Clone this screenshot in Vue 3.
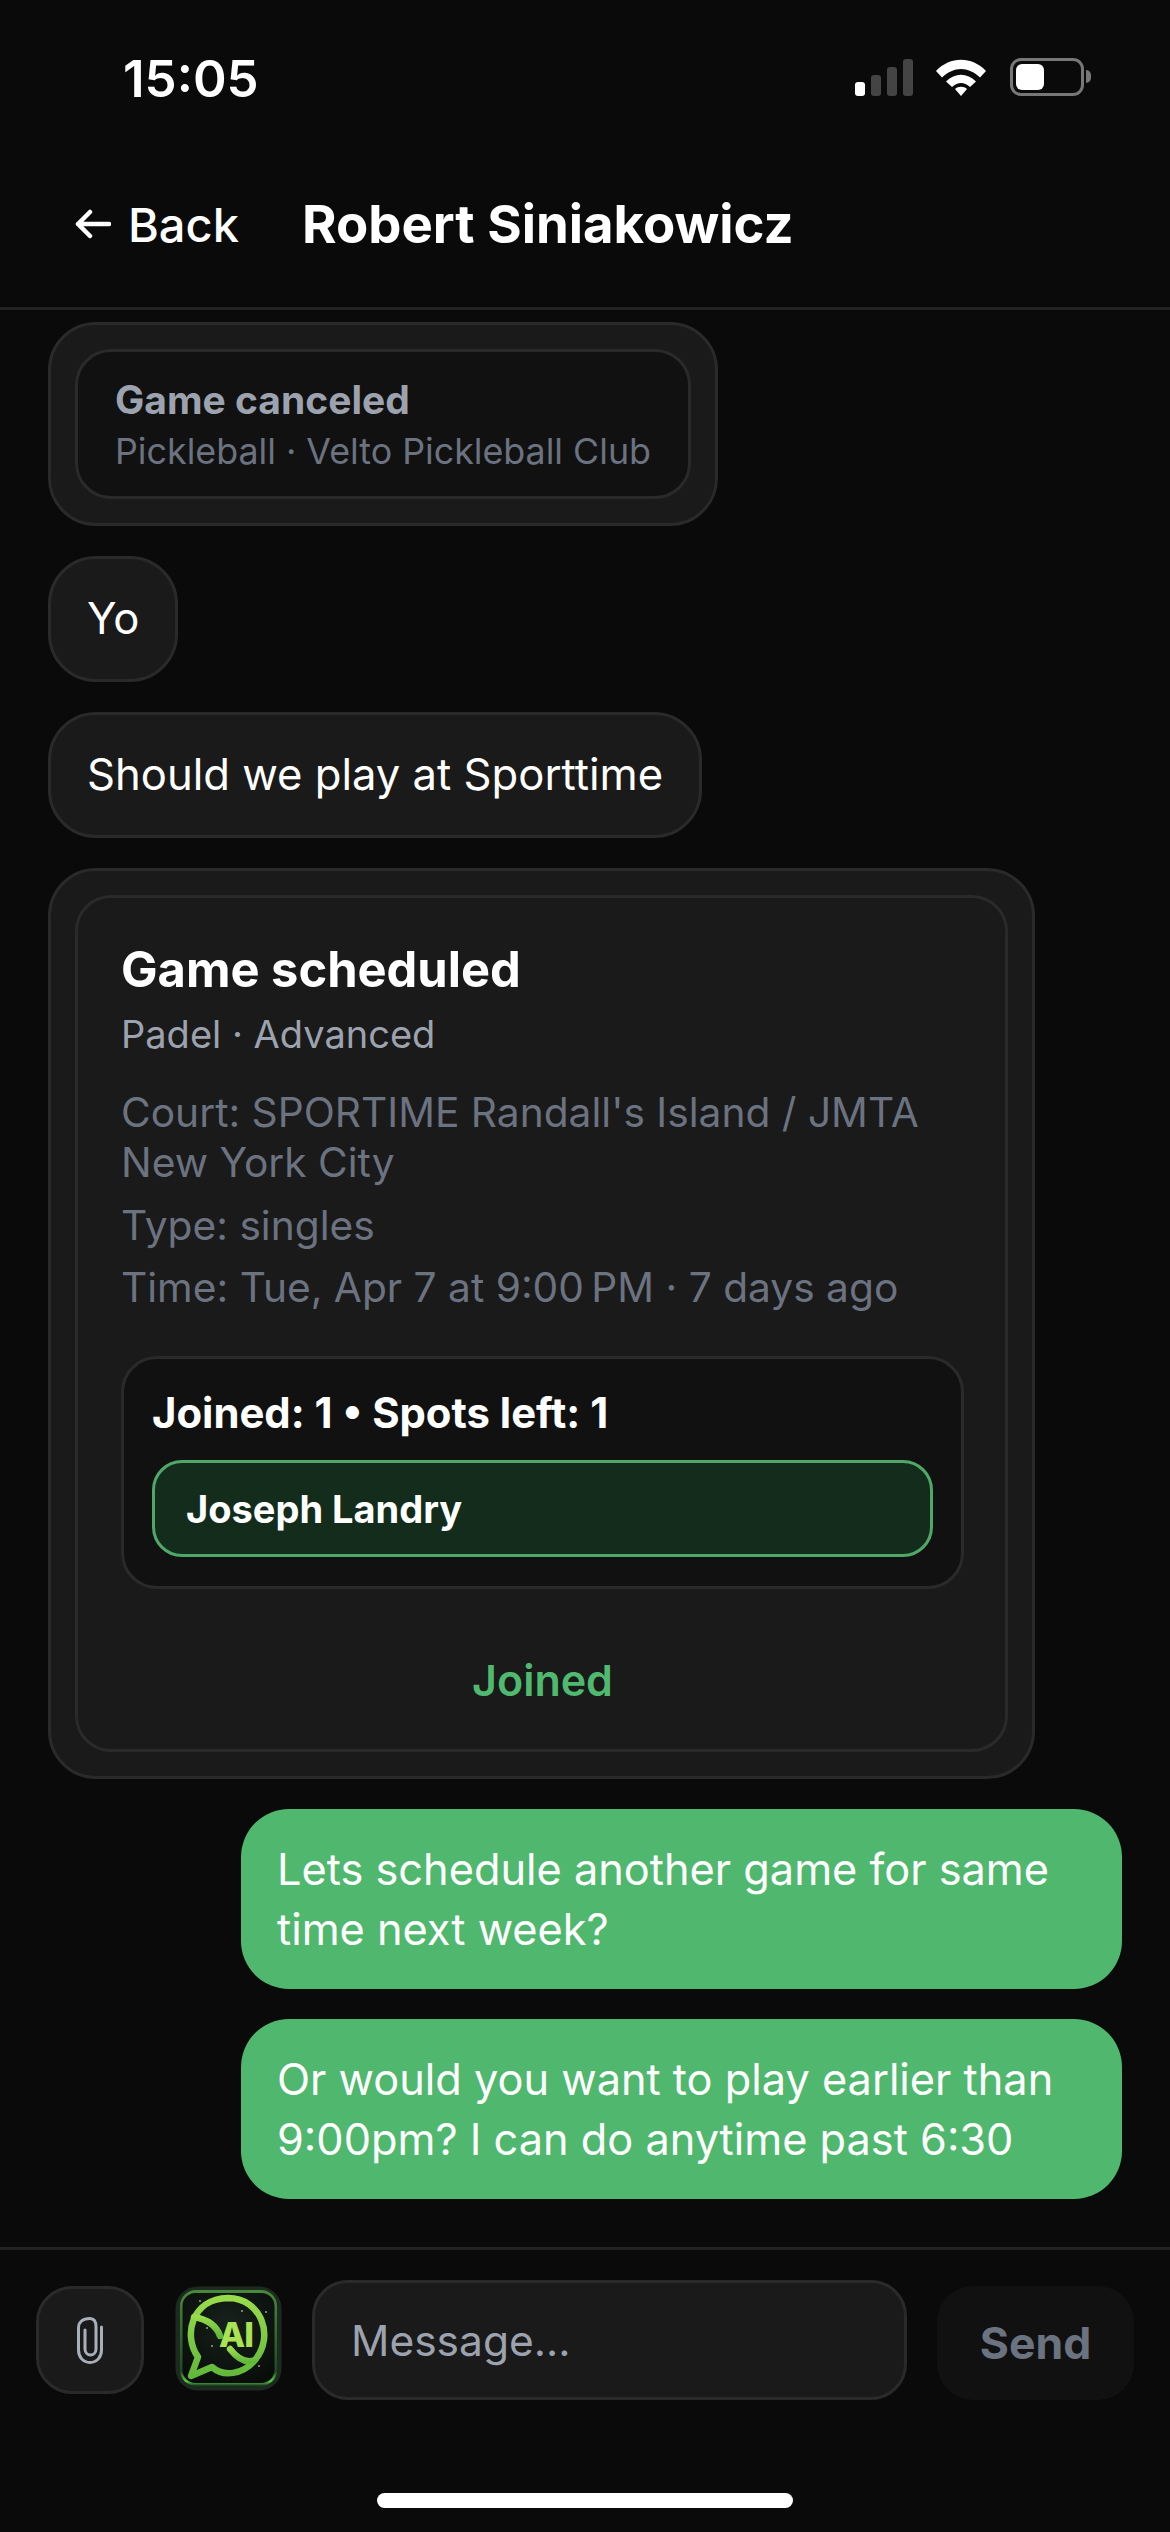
<script setup>
const statusBars = [
  { h: 14, on: true },
  { h: 21, on: false },
  { h: 29, on: false },
  { h: 37, on: false },
]
const courtLines = ["Court: SPORTIME Randall's Island / JMTA New York City", 'Type: singles', 'Time: Tue, Apr 7 at 9:00\u202FPM · 7 days ago']
const outgoing = ['Lets schedule another game for same time next week?', 'Or would you want to play earlier than 9:00pm? I can do anytime past 6:30']
</script>

<template>
  <div class="page">
    <div class="status">
      <span class="time">15:05</span>
      <div class="status-icons">
        <div class="signal">
          <i v-for="(b, i) in statusBars" :key="i" :class="{ on: b.on }" :style="{ height: b.h + 'px' }"></i>
        </div>
        <svg class="wifi" width="50" height="37" viewBox="0 0 50 37">
          <path d="M0 12 C14 -3 36 -3 50 12 L44 18.5 C32 7 18 7 6 18.5 Z" fill="#fff"/>
          <path d="M10 22.5 C19 13.5 31 13.5 40 22.5 L34 28 C28 22.5 22 22.5 16 28 Z" fill="#fff"/>
          <path d="M19 30 C22 27 28 27 31 30 L25 37 Z" fill="#fff"/>
        </svg>
        <div class="battery"><div class="battery-fill"></div></div>
        <div class="battery-cap"></div>
      </div>
    </div>

    <header class="nav">
      <div class="back">
        <svg width="36" height="30" viewBox="0 0 36 30" fill="none" stroke="#fff" stroke-width="4.5" stroke-linecap="round" stroke-linejoin="round">
          <path d="M34 15 H3 M15 3 L3 15 L15 27"/>
        </svg>
        <span>Back</span>
      </div>
      <h1 class="title">Robert Siniakowicz</h1>
    </header>

    <main class="messages">
      <div class="bubble card small">
        <div class="inner small-inner">
          <div class="cancel-title">Game canceled</div>
          <div class="cancel-sub">Pickleball · Velto Pickleball Club</div>
        </div>
      </div>
      <div class="bubble text">Yo</div>
      <div class="bubble text">Should we play at Sporttime</div>
      <div class="bubble card large">
        <div class="inner large-inner">
          <div class="game-title">Game scheduled</div>
          <div class="game-sub">Padel · Advanced</div>
          <div class="details">
            <div v-for="line in courtLines" :key="line">{{ line }}</div>
          </div>
          <div class="roster">
            <div class="roster-head">Joined: 1 • Spots left: 1</div>
            <div class="player">Joseph Landry</div>
          </div>
          <div class="joined">Joined</div>
        </div>
      </div>
      <div v-for="m in outgoing" :key="m" class="bubble out">{{ m }}</div>
    </main>

    <footer class="composer">
      <button class="attach" aria-label="Attach">
        <svg width="26" height="47" viewBox="0 0 26 47" fill="none" stroke="#a9afb8" stroke-width="3" stroke-linecap="round">
          <path d="M24.500 10 V33 C24.500 40 20 45.500 13 45.500 C6 45.500 1.500 40 1.500 33 V11 C1.500 5 6 1.500 13 1.500 C17 1.500 19 5 19 10 V32 C19 36 16 38 13.500 38 C11 38 8 36 8 32 V13"/>
        </svg>
      </button>
      <div class="ai">
        <svg width="107" height="107" viewBox="0 0 107 107">
          <defs>
            <linearGradient id="rim" x1="0" y1="0" x2="0" y2="1">
              <stop offset="0" stop-color="#4a8a3c"/>
              <stop offset="0.85" stop-color="#1f4a22"/>
              <stop offset="0.95" stop-color="#58d044"/>
              <stop offset="1" stop-color="#16301a"/>
            </linearGradient>
            <linearGradient id="ring" x1="0" y1="0" x2="0" y2="1">
              <stop offset="0" stop-color="#98dc4c"/>
              <stop offset="1" stop-color="#62b83a"/>
            </linearGradient>
            <radialGradient id="face" cx="0.5" cy="0.35" r="0.8">
              <stop offset="0" stop-color="#17211c"/>
              <stop offset="1" stop-color="#070a08"/>
            </radialGradient>
          </defs>
          <rect x="0.500" y="0.500" width="106" height="104" rx="22" fill="#1d2a20"/>
          <rect x="5" y="4" width="97" height="96" rx="16" fill="url(#rim)"/>
          <rect x="7.500" y="7" width="92" height="90" rx="13" fill="url(#face)"/>
          <g fill="none" stroke="url(#ring)" stroke-width="6.500" stroke-linecap="round" stroke-linejoin="round">
            <path d="M23 71 C8 50 16 13 53 12 C86 12 100 50 80 74 C68 89 48 91 37 81 L16 90 Z"/>
            <path d="M19 31 C30 33 41 38 45 50"/>
            <path d="M55 63 C62 72 70 78 80 74"/>
          </g>
          <g fill="#c8e7b0" opacity="0.7">
            <circle cx="25" cy="15" r="1"/><circle cx="37" cy="60" r="1"/><circle cx="32" cy="42" r="1"/><circle cx="84" cy="80" r="1"/>
            <circle cx="67" cy="25" r="1"/><circle cx="91" cy="26" r="1"/>
          </g>
          <text x="61" y="61" text-anchor="middle" class="ai-text">AI</text>
        </svg>
      </div>
      <div class="input">Message...</div>
      <div class="send">Send</div>
    </footer>

    <div class="home-area"><div class="home-bar"></div></div>
  </div>
</template>

<style>
html, body { margin: 0; background: #0a0a0a; }
</style>

<style scoped>
.page {
  width: 1170px;
  height: 2532px;
  background: #0a0a0a;
  color: #fff;
  display: flex;
  flex-direction: column;
  overflow: hidden;
  font-family: Inter, "Liberation Sans", sans-serif;
}
.status {
  height: 156px;
  flex: none;
  box-sizing: border-box;
  padding: 49px 79px 0 123px;
  display: flex;
  justify-content: space-between;
  align-items: flex-start;
}
.time { font-size: 51px; line-height: 60px; font-weight: 600; }
.status-icons { display: flex; align-items: flex-end; margin-top: 9px; height: 38px; }
.signal { display: flex; align-items: flex-end; gap: 6px; margin-right: 23px; }
.signal i { display: block; width: 10px; border-radius: 3px; background: #444; }
.signal i.on { background: #fff; }
.wifi { margin-right: 24px; }
.battery {
  width: 74px;
  height: 38px;
  box-sizing: border-box;
  border: 3px solid #777;
  border-radius: 11px;
  padding: 3px;
}
.battery-fill { width: 28px; height: 100%; background: #fff; border-radius: 6px; }
.battery-cap { width: 5px; height: 13px; background: #777; border-radius: 0 7px 7px 0; margin: 0 0 13px 2px; }
.nav {
  height: 154px;
  flex: none;
  box-sizing: border-box;
  border-bottom: 3px solid #222;
  display: flex;
  align-items: center;
  padding: 0 0 15px 75px;
}
.back { display: flex; align-items: center; gap: 17px; font-size: 47px; font-weight: 500; width: 227px; }
.title { margin: 0; font-size: 52.7px; line-height: 64px; font-weight: 700; }
.messages {
  flex: 1;
  min-height: 0;
  box-sizing: border-box;
  padding: 12px 48px 0;
  display: flex;
  flex-direction: column;
  align-items: flex-start;
  gap: 30px;
}
.bubble {
  box-sizing: border-box;
  background: #1a1a1a;
  border: 3px solid #2a2a2a;
  border-radius: 48px;
  flex: none;
}
.text { padding: 24px 36px; font-size: 43.6px; line-height: 72px; }
.card { padding: 24px; }
.small { width: 670px; }
.large { width: 987px; }
.inner {
  box-sizing: border-box;
  border: 3px solid #2a2a2a;
  border-radius: 36px;
}
.small-inner { height: 150px; padding: 24px 36px 0 37px; background: #111; white-space: nowrap; }
.cancel-title { font-size: 39px; line-height: 48px; font-weight: 700; color: #9ca3af; }
.cancel-sub { font-size: 35.8px; line-height: 48px; color: #6b7280; margin-top: 3px; }
.large-inner { padding: 40px 41px 0 43px; height: 857px; }
.game-title { font-size: 48.8px; line-height: 64px; font-weight: 700; }
.game-sub { font-size: 38px; line-height: 52px; color: #9ca3af; margin-top: 6px; }
.details { font-size: 40.7px; line-height: 50px; color: #6b7280; margin-top: 28px; display: flex; flex-direction: column; gap: 12.5px; }
.roster {
  box-sizing: border-box;
  margin-top: 43px;
  height: 233px;
  background: #111;
  border: 3px solid #2a2a2a;
  border-radius: 36px;
  padding: 30px 28px;
}
.roster-head { font-size: 41.8px; line-height: 48px; font-weight: 700; }
.player {
  box-sizing: border-box;
  height: 97px;
  margin-top: 23px;
  background: #142c1c;
  border: 3px solid #4fa868;
  border-radius: 30px;
  padding: 0 31px;
  display: flex;
  align-items: center;
  font-size: 38px;
  font-weight: 700;
}
.joined { text-align: center; color: #4fb96f; font-size: 43px; line-height: 52px; font-weight: 600; margin-top: 65px; }
.out {
  background: #4fb86e;
  border: none;
  width: 881px;
  height: 180px;
  padding: 30px 36px 0;
  font-size: 43.3px;
  line-height: 60px;
  align-self: flex-end;
}
.composer {
  flex: none;
  height: 173px;
  box-sizing: border-box;
  border-top: 3px solid #222;
  padding: 30px 36px 0;
  display: flex;
  align-items: flex-start;
  gap: 30px;
}
.attach {
  width: 108px;
  height: 108px;
  margin: 6px 1px 0 0;
  box-sizing: border-box;
  background: #1a1a1a;
  border: 3px solid #2a2a2a;
  border-radius: 36px;
  display: flex;
  align-items: center;
  justify-content: center;
  padding: 0;
}
.ai { width: 107px; height: 107px; margin-top: 6px; }
.ai-text { font-size: 34px; font-weight: 800; letter-spacing: -1px; fill: #a8e352; font-family: Inter, sans-serif; }
.input {
  width: 595px;
  height: 120px;
  box-sizing: border-box;
  background: #1a1a1a;
  border: 3px solid #2a2a2a;
  border-radius: 36px;
  padding: 0 36px;
  display: flex;
  align-items: center;
  font-size: 42.5px;
  color: #9ca3af;
}
.send {
  width: 197px;
  height: 114px;
  margin-top: 6px;
  background: #111;
  border-radius: 36px;
  display: flex;
  align-items: center;
  justify-content: center;
  font-size: 44.5px;
  font-weight: 700;
  color: #6b7280;
}
.home-area { flex: none; height: 112px; box-sizing: border-box; display: flex; justify-content: center; padding-top: 73px; }
.home-bar { width: 416px; height: 15px; border-radius: 8px; background: #fff; }
</style>
